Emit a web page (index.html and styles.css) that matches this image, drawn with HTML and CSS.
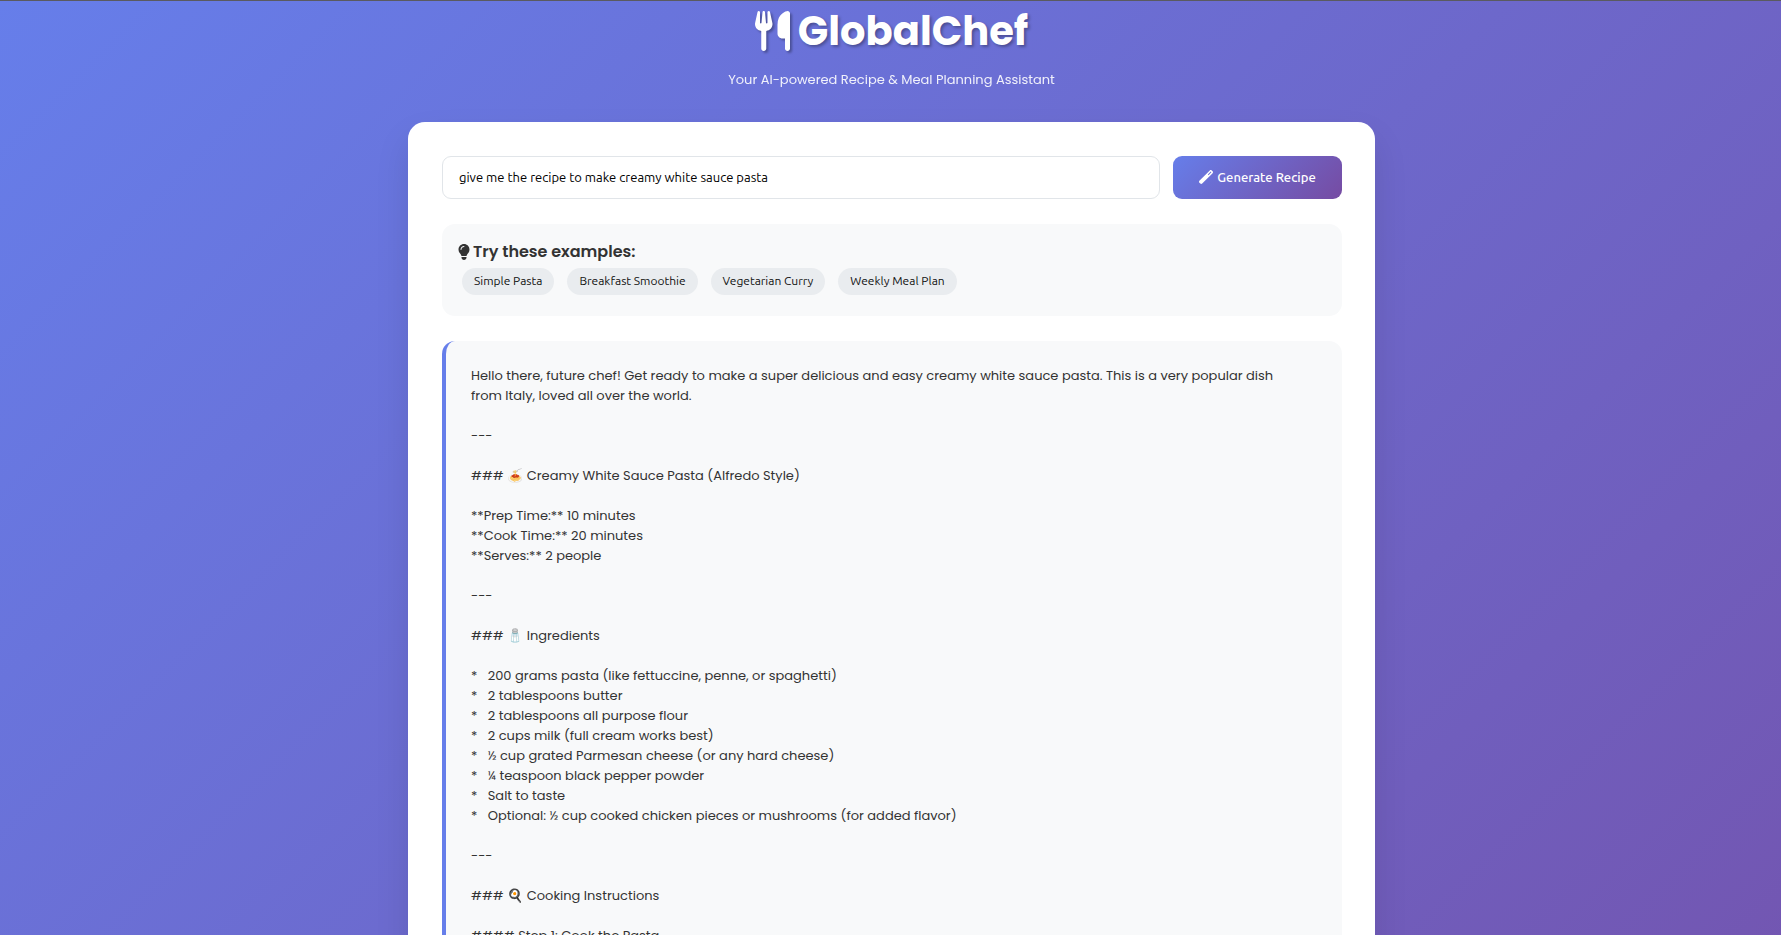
FILE: index.html
```html
<!DOCTYPE html>
<html lang="en">
<head>
<meta charset="utf-8">
<title>GlobalChef</title>
<link rel="stylesheet" href="styles.css">
</head>
<body>
<div class="page">
  <header class="header">
    <h1 class="brand">
      <svg class="brand-icon" viewBox="0 0 448 512" aria-hidden="true"><path d="M416 0C400 0 288 32 288 176V288c0 35.3 28.7 64 64 64h32V480c0 17.7 14.3 32 32 32s32-14.3 32-32V352 240 32c0-17.7-14.3-32-32-32zM64 16C64 7.8 57.9 1 49.7 .1S34.2 4.6 32.4 12.5L2.1 148.8C.7 155.1 0 161.5 0 167.9c0 45.9 35.1 83.6 80 87.7V480c0 17.7 14.3 32 32 32s32-14.3 32-32V255.6c44.9-4.1 80-41.8 80-87.7c0-6.4-.7-12.8-2.1-19.1L191.6 12.5c-1.8-8-9.3-13.3-17.4-12.4S160 7.8 160 16V150.2c0 5.4-4.4 9.8-9.8 9.8c-5.1 0-9.3-3.9-9.8-9L127.9 14.6C127.2 6.3 120.3 0 112 0s-15.2 6.3-15.9 14.6L83.7 151c-.5 5.1-4.7 9-9.8 9c-5.4 0-9.8-4.4-9.8-9.8V16z"/></svg>
      <span>GlobalChef</span>
    </h1>
    <p class="tagline">Your AI-powered Recipe &amp; Meal Planning Assistant</p>
  </header>

  <main class="card">
    <form class="prompt">
      <input class="prompt-input" type="text" aria-label="Recipe request" value="give me the recipe to make creamy white sauce pasta">
      <button class="generate" type="button">
        <svg class="generate-icon" viewBox="0 0 512 512" aria-hidden="true"><path d="M14.1 463.3c-18.7-18.7-18.7-49.1 0-67.9L395.4 14.1c18.7-18.7 49.1-18.7 67.9 0l34.6 34.6c18.7 18.7 18.7 49.1 0 67.9L116.5 497.9c-18.7 18.7-49.1 18.7-67.9 0L14.1 463.3zM347.6 187.6l105-105L429.4 59.3l-105 105 23.3 23.3z"/></svg>
        <span>Generate Recipe</span>
      </button>
    </form>

    <section class="examples">
      <h2 class="examples-title">
        <svg class="bulb" viewBox="0 0 384 512" aria-hidden="true"><path d="M272 384c9.6-31.9 29.5-59.1 49.2-86.2c5.2-7.1 10.4-14.2 15.4-21.4c19.8-28.5 31.4-63 31.4-100.3C368 78.8 289.2 0 192 0S16 78.8 16 176c0 37.3 11.6 71.9 31.4 100.3c5 7.2 10.2 14.3 15.4 21.4c19.8 27.1 39.7 54.4 49.2 86.2H272zM192 512c44.2 0 80-35.8 80-80V416H112v16c0 44.2 35.8 80 80 80zM112 176c0 8.8-7.2 16-16 16s-16-7.2-16-16c0-61.9 50.1-112 112-112c8.8 0 16 7.2 16 16s-7.2 16-16 16c-44.2 0-80 35.8-80 80z"/></svg>
        <span>Try these examples:</span>
      </h2>
      <div class="chips">
        <button class="chip" type="button">Simple Pasta</button>
        <button class="chip" type="button">Breakfast Smoothie</button>
        <button class="chip" type="button">Vegetarian Curry</button>
        <button class="chip" type="button">Weekly Meal Plan</button>
      </div>
    </section>

    <article class="response">Hello there, future chef! Get ready to make a super delicious and easy creamy white sauce pasta. This is a very popular dish from Italy, loved all over the world.

---

### 🍝 Creamy White Sauce Pasta (Alfredo Style)

**Prep Time:** 10 minutes
**Cook Time:** 20 minutes
**Serves:** 2 people

---

### 🧂 Ingredients

*   200 grams pasta (like fettuccine, penne, or spaghetti)
*   2 tablespoons butter
*   2 tablespoons all purpose flour
*   2 cups milk (full cream works best)
*   ½ cup grated Parmesan cheese (or any hard cheese)
*   ¼ teaspoon black pepper powder
*   Salt to taste
*   Optional: ½ cup cooked chicken pieces or mushrooms (for added flavor)

---

### 🍳 Cooking Instructions

#### Step 1: Cook the Pasta
</article>
  </main>
</div>
</body>
</html>
```
FILE: styles.css
```css
* {
  box-sizing: border-box;
}

body {
  margin: 0;
  height: 100vh;
  overflow: hidden;
  border-top: 1px solid #5a5a60;
  background: #764ba2 linear-gradient(135deg, #667eea 0%, #764ba2 100%) 0 0 / 100% 1720px no-repeat;
  color: #333;
  font-family: Poppins, Inter, "Noto Sans", sans-serif;
  font-size: 13px;
}

.page {
  max-width: 969px;
  margin: 0 auto;
  padding-left: 2px;
}

.header {
  display: flex;
  flex-direction: column;
  align-items: center;
  gap: 9px;
  height: 121px;
  color: #fff;
}

.brand {
  display: flex;
  align-items: center;
  gap: 8px;
  margin: 0;
  font-size: 40px;
  line-height: 60px;
  font-weight: 700;
  text-shadow: 2px 2px 3px rgba(0, 0, 0, 0.3);
}

.brand-icon {
  width: 35px;
  height: 40px;
  fill: #fff;
  filter: drop-shadow(2px 2px 1px rgba(0, 0, 0, 0.3));
}

.tagline {
  margin: 0;
  font-size: 13px;
  line-height: 20px;
  opacity: 0.9;
}

.card {
  padding: 34px 33px 34px 34px;
  border-radius: 17px;
  background: #fff;
  box-shadow: 0 17px 34px rgba(0, 0, 0, 0.1);
}

.prompt {
  display: flex;
  gap: 13px;
  margin-bottom: 25px;
}

.prompt-input,
.generate,
.chip {
  font-family: Ubuntu, "Noto Sans", sans-serif;
}

.prompt-input {
  flex: 1;
  height: 43px;
  padding: 0 16px 2px;
  border: 1px solid #e1e5e9;
  border-radius: 9px;
  background: #fff;
  color: #000;
  font-size: 13px;
}

.generate {
  display: flex;
  align-items: center;
  justify-content: center;
  gap: 4px;
  width: 169px;
  padding: 0 0 2px;
  border: 0;
  border-radius: 9px;
  background: linear-gradient(135deg, #667eea 0%, #764ba2 100%);
  color: #fff;
  font-size: 13px;
  font-weight: 500;
}

.generate-icon {
  width: 14px;
  height: 14px;
  fill: #fff;
}

.examples {
  margin-bottom: 25px;
  padding: 17px 16px 21px;
  border-radius: 13px;
  background: #f8f9fa;
}

.examples-title {
  display: flex;
  align-items: center;
  gap: 3px;
  margin: 0 0 6px;
  font-size: 16px;
  line-height: 21px;
  font-weight: 600;
}

.bulb {
  width: 12px;
  height: 16px;
  fill: #333;
}

.chips {
  display: flex;
  gap: 13px;
  padding-left: 4px;
}

.chip {
  height: 27px;
  padding: 0 12px 2px;
  border: 0;
  border-radius: 17px;
  background: #e9ecef;
  color: #111;
  font-size: 12px;
}

.response {
  padding: 25px 48px 25px 25px;
  border-left: 4px solid #667eea;
  border-radius: 13px;
  background: #f8f9fa;
  font-size: 13px;
  line-height: 20px;
  white-space: pre-wrap;
}
```
